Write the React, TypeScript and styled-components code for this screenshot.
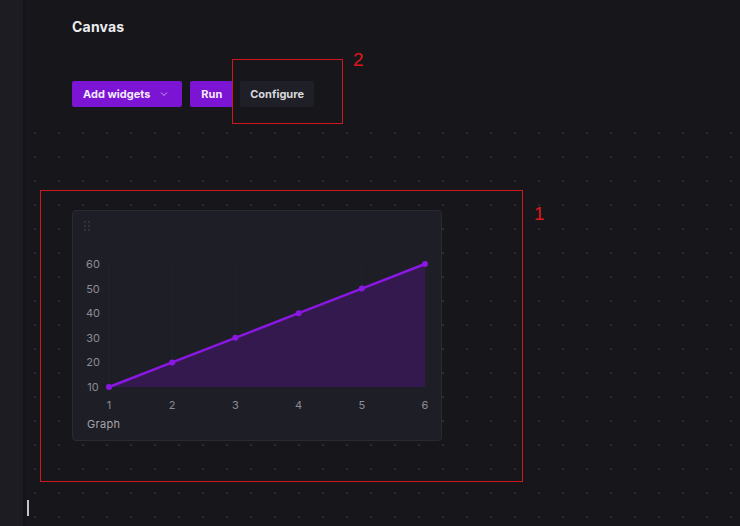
import React from "react";
import styled, { createGlobalStyle } from "styled-components";

const Global = createGlobalStyle`
  html, body { margin: 0; padding: 0; background: #16161b; }
  body { font-family: "Inter", "Open Sans", sans-serif; }
  * { box-sizing: border-box; }
`;

const Page = styled.div`
  position: relative;
  display: flex;
  width: 740px;
  height: 526px;
  overflow: hidden;
  background: #16161b;
`;

const Sidebar = styled.aside`
  width: 25px;
  flex: none;
  background: #1c1c22;
  border-right: 2px solid #141418;
`;

const Main = styled.main`
  flex: 1;
  display: flex;
  flex-direction: column;
  min-width: 0;
`;

const Header = styled.header`
  height: 120px;
  flex: none;
  padding: 17px 0 0 47px;
  display: flex;
  flex-direction: column;
`;

const Title = styled.h1`
  margin: 0;
  font-size: 14px;
  line-height: 20px;
  font-weight: 700;
  color: #ececf0;
  letter-spacing: 0.2px;
`;

const Toolbar = styled.div`
  margin-top: 44px;
  display: flex;
  gap: 7px;
`;

const Button = styled.button<{ $variant?: "primary" | "ghost"; $offset?: number }>`
  height: 26px;
  border: none;
  border-radius: 2px;
  padding: 0 ${(p) => (p.$variant === "ghost" ? 10 : 11)}px;
  margin-left: ${(p) => p.$offset ?? 0}px;
  display: flex;
  align-items: center;
  gap: 10px;
  font-family: inherit;
  font-size: 11px;
  font-weight: 700;
  background: ${(p) => (p.$variant === "ghost" ? "#1f1f27" : "#7b14d3")};
  color: ${(p) => (p.$variant === "ghost" ? "#d8d8dd" : "#f4ecff")};
`;

const Canvas = styled.section`
  flex: 1;
  padding: 90px 0 0 47px;
  background-color: #16161b;
  background-image: radial-gradient(circle, #2a2a31 0.9px, transparent 1.3px);
  background-size: 24px 24px;
  background-position: -2px 1px;
`;

const Card = styled.div`
  width: 370px;
  height: 231px;
  background: #1e1e26;
  border: 1px solid #2a2a33;
  border-radius: 4px;
  display: flex;
  flex-direction: column;
  padding: 10px 0 0 0;
`;

const Handle = styled.div`
  margin-left: 11px;
  width: 8px;
  height: 11px;
  display: grid;
  grid-template-columns: repeat(2, 2px);
  grid-template-rows: repeat(3, 2px);
  column-gap: 2px;
  row-gap: 2px;
  & > span {
    background: #3a3a44;
    border-radius: 1px;
  }
`;

const ChartSvg = styled.svg`
  display: block;
  margin-top: 14px;
`;

const Caption = styled.div`
  margin: 3px 0 0 14px;
  font-size: 11px;
  line-height: 14px;
  color: #a4a4ad;
  letter-spacing: 0.3px;
`;

const Annotation = styled.div<{ $x: number; $y: number; $w: number; $h: number }>`
  position: absolute;
  left: ${(p) => p.$x}px;
  top: ${(p) => p.$y}px;
  width: ${(p) => p.$w}px;
  height: ${(p) => p.$h}px;
  border: 1px solid #d0161e;
  pointer-events: none;
`;

const AnnotationLabel = styled.div<{ $x: number; $y: number }>`
  position: absolute;
  left: ${(p) => p.$x}px;
  top: ${(p) => p.$y}px;
  font-family: "Liberation Sans", sans-serif;
  font-size: 19px;
  line-height: 20px;
  color: #e0161e;
`;

const Caret = styled.div`
  position: absolute;
  left: 27px;
  top: 500px;
  width: 2px;
  height: 16px;
  background: #c4c4c8;
`;

const Chevron = () => (
  <svg width="8" height="6" viewBox="0 0 8 6" style={{ marginRight: 3 }}>
    <path d="M1 1.5 L4 4.5 L7 1.5" fill="none" stroke="#c9a6ee" strokeWidth="1" />
  </svg>
);

const data = [10, 20, 30, 40, 50, 60];
const X0 = 36;
const X1 = 352;
const YTOP = 18;
const YBOT = 141;
const xAt = (i: number) => X0 + ((X1 - X0) * i) / (data.length - 1);
const yAt = (v: number) => YBOT - ((v - 10) / 50) * (YBOT - YTOP);

const Chart = () => {
  const pts = data.map((v, i) => `${xAt(i)},${yAt(v)}`).join(" ");
  const area = `M${X0},${YBOT} L${pts.split(" ").join(" L")} L${X1},${YBOT} Z`;
  return (
    <ChartSvg width="368" height="168" viewBox="0 0 368 168">
      {data.map((_, i) => (
        <line key={"g" + i} x1={xAt(i)} x2={xAt(i)} y1={YTOP} y2={YBOT} stroke="#22222a" strokeWidth="1" />
      ))}
      <path d={area} fill="#34194f" />
      <polyline points={pts} fill="none" stroke="#8a18e2" strokeWidth="2.5" strokeLinejoin="round" />
      {data.map((v, i) => (
        <circle key={"c" + i} cx={xAt(i)} cy={yAt(v)} r="3" fill="#8a18e2" />
      ))}
      {[60, 50, 40, 30, 20, 10].map((v) => (
        <text
          key={"y" + v}
          x={20}
          y={yAt(v) + 4}
          textAnchor="middle"
          fontSize="11"
          fill="#8c8c95"
          fontFamily="Inter, sans-serif"
        >
          {v}
        </text>
      ))}
      {data.map((_, i) => (
        <text
          key={"x" + i}
          x={xAt(i)}
          y={163}
          textAnchor="middle"
          fontSize="11"
          fill="#8c8c95"
          fontFamily="Inter, sans-serif"
        >
          {i + 1}
        </text>
      ))}
    </ChartSvg>
  );
};

export default function App() {
  return (
    <>
      <Global />
      <Page>
        <Sidebar />
        <Main>
          <Header>
            <Title>Canvas</Title>
            <Toolbar>
              <Button>
                Add widgets
                <Chevron />
              </Button>
              <Button $offset={1}>Run</Button>
              <Button $variant="ghost">Configure</Button>
            </Toolbar>
          </Header>
          <Canvas>
            <Card>
              <Handle>
                <span />
                <span />
                <span />
                <span />
                <span />
                <span />
              </Handle>
              <Chart />
              <Caption>Graph</Caption>
            </Card>
          </Canvas>
        </Main>
        <Annotation $x={232} $y={59} $w={111} $h={65} />
        <AnnotationLabel $x={353} $y={50}>2</AnnotationLabel>
        <Annotation $x={40} $y={190} $w={483} $h={292} />
        <AnnotationLabel $x={534} $y={204}>1</AnnotationLabel>
        <Caret />
      </Page>
    </>
  );
}
